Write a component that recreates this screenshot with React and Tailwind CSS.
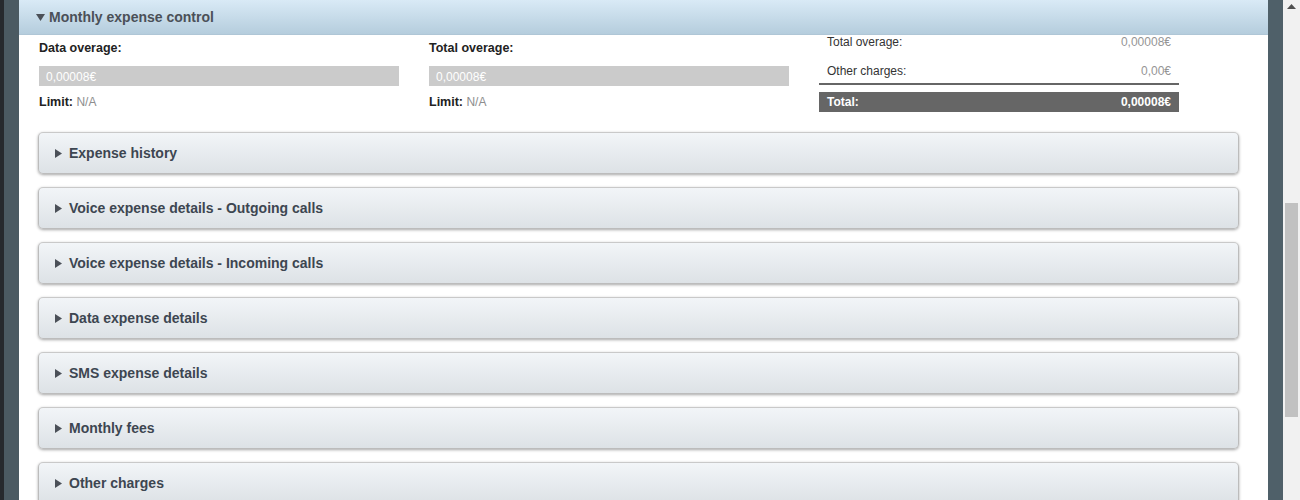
import React from "react";

const sections = [
  "Expense history",
  "Voice expense details - Outgoing calls",
  "Voice expense details - Incoming calls",
  "Data expense details",
  "SMS expense details",
  "Monthly fees",
  "Other charges",
];

function Tri({ down }) {
  return down ? (
    <svg width="9" height="7" viewBox="0 0 9 7" className="shrink-0">
      <path d="M0 0 H9 L4.5 7 Z" fill="#4b5058" />
    </svg>
  ) : (
    <svg width="7" height="9" viewBox="0 0 7 9" className="shrink-0">
      <path d="M0 0 L7 4.5 L0 9 Z" fill="#4b5058" />
    </svg>
  );
}

function OverageCol({ label }) {
  return (
    <div className="w-[360px] flex flex-col pt-[6px]">
      <div className="h-[14px] leading-[14px] text-[12.5px] font-bold text-[#222]">{label}</div>
      <div className="mt-[11px] h-[20px] overflow-hidden bg-[#cbcbcb] text-white text-[12px] leading-[23px] pl-[7px]">
        0,00008€
      </div>
      <div className="mt-[9px] h-[14px] leading-[14px] text-[12px]">
        <span className="font-bold text-[#222] text-[12.5px]">Limit:</span>{" "}
        <span className="text-[#8e8e8e]">N/A</span>
      </div>
    </div>
  );
}

export default function App() {
  return (
    <div
      className="w-[1300px] h-[500px] overflow-hidden flex bg-white"
      style={{ fontFamily: '"Liberation Sans", Arial, sans-serif' }}
    >
      <div className="w-[19px] h-full flex shrink-0">
        <div className="w-[4px] h-full bg-[#26292d]" />
        <div className="w-[15px] h-full bg-[#4b5a62]" />
      </div>
      <div className="w-[1249px] h-full flex flex-col shrink-0 bg-white">
        <div className="h-[35px] shrink-0 flex items-center gap-[4px] pl-[17px] bg-gradient-to-b from-[#d9eaf6] to-[#b5cddd] border-b border-[#afc6d6]">
          <Tri down />
          <span className="text-[14px] font-bold text-[#4b5058]">Monthly expense control</span>
        </div>
        <div className="h-[97px] shrink-0 flex gap-[30px] pl-[20px]">
          <OverageCol label="Data overage:" />
          <OverageCol label="Total overage:" />
          <div className="w-[360px] flex flex-col">
            <div className="h-[15px] leading-[15px] text-[12px] flex justify-between px-[8px]">
              <span className="text-[#333]">Total overage:</span>
              <span className="text-[#959595]">0,00008€</span>
            </div>
            <div className="mt-[14px] pb-[4px] border-b-2 border-[#666] h-[15px] leading-[15px] text-[12px] flex justify-between px-[8px] box-content">
              <span className="text-[#333]">Other charges:</span>
              <span className="text-[#959595]">0,00€</span>
            </div>
            <div className="mt-[7px] h-[20px] bg-[#666] text-white font-bold text-[12px] leading-[20px] flex justify-between px-[8px]">
              <span>Total:</span>
              <span>0,00008€</span>
            </div>
          </div>
        </div>
        <div className="flex flex-col gap-[13px] pl-[19px]">
          {sections.map((s) => (
            <div
              key={s}
              className="w-[1201px] h-[42px] shrink-0 rounded-[5px] border border-[#bcbcbc] border-t-[#c9c9c9] bg-gradient-to-b from-[#f2f5f8] to-[#dde2e6] shadow-[0_1px_3px_rgba(0,0,0,0.35)] flex items-center gap-[7px] pl-[16px]"
            >
              <Tri />
              <span className="text-[14px] font-bold text-[#3d4651]">{s}</span>
            </div>
          ))}
        </div>
      </div>
      <div className="w-[15px] h-full shrink-0 bg-[#4f6069]" />
      <div className="w-[17px] h-full shrink-0 bg-[#f1f1f1] flex flex-col items-center">
        <svg width="9" height="5" viewBox="0 0 9 5" className="mt-[4px]">
          <path d="M0 5 L4.5 0 L9 5 Z" fill="#505050" />
        </svg>
        <div className="mt-[194px] w-[13px] h-[214px] bg-[#c1c1c1]" />
      </div>
    </div>
  );
}
